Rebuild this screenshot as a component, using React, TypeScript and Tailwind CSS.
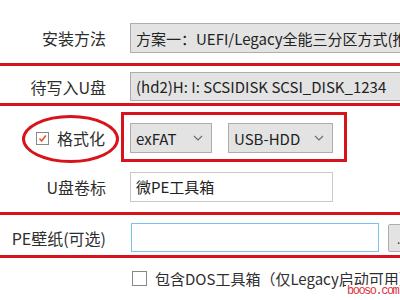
import React from "react";

const cjk = { fontFamily: '"Noto Sans CJK SC", "Noto Sans", sans-serif' };

const Chevron = () => (
  <svg width="10" height="6" viewBox="0 0 10 6" className="shrink-0">
    <path d="M1 1 L5 5 L9 1" fill="none" stroke="#6b6b6b" strokeWidth="1.1" />
  </svg>
);

const Label = ({ children }: { children: React.ReactNode }) => (
  <div className="w-[106px] shrink-0 text-right text-[16px] leading-none text-[#2e2e2e] whitespace-nowrap">
    {children}
  </div>
);

const Combo = ({
  text,
  className,
  chevron = true,
}: {
  text: string;
  className: string;
  chevron?: boolean;
}) => (
  <div
    className={`flex items-center justify-between border border-[#adadad] bg-[#e3e3e3] pl-[5px] pr-[8px] text-[15px] leading-none text-[#222] whitespace-nowrap overflow-hidden ${className}`}
  >
    <span>{text}</span>
    {chevron && <Chevron />}
  </div>
);

export default function App() {
  return (
    <div
      className="relative w-[400px] h-[300px] overflow-hidden bg-white"
      style={cjk}
    >
      <div className="flex flex-col pt-[23px]">
        <div className="flex items-center gap-[24px] h-[30px]">
          <Label>安装方法</Label>
          <Combo
            text="方案一：UEFI/Legacy全能三分区方式(推荐)"
            className="w-[300px] h-[30px] shrink-0"
            chevron={false}
          />
        </div>

        <div className="flex items-center gap-[24px] h-[29px] mt-[19px]">
          <Label>待写入U盘</Label>
          <Combo
            text="(hd2)H: I: SCSIDISK SCSI_DISK_1234"
            className="w-[300px] h-[29px] shrink-0"
            chevron={false}
          />
        </div>

        <div className="flex items-center h-[30px] mt-[22px]">
          <div className="w-[106px] shrink-0 flex items-center justify-end gap-[8px] pr-[1px]">
            <div className="w-[13px] h-[13px] border border-[#888] bg-white flex items-center justify-center">
              <svg width="9" height="9" viewBox="0 0 9 9">
                <path d="M1.5 4.5 L3.6 7 L7.8 1.5" fill="none" stroke="#e0542a" strokeWidth="1.6" />
              </svg>
            </div>
            <span className="text-[16px] leading-none text-[#2e2e2e]">格式化</span>
          </div>
          <div className="flex items-center gap-[16px] ml-[24px]">
            <Combo text="exFAT" className="w-[82px] h-[30px]" />
            <Combo text="USB-HDD" className="w-[105px] h-[30px]" />
          </div>
        </div>

        <div className="flex items-center gap-[24px] h-[30px] mt-[19px]">
          <Label>U盘卷标</Label>
          <div className="w-[203px] h-[30px] border border-[#c8c8c8] bg-white flex items-center pl-[5px] text-[15px] text-[#222]">
            微PE工具箱
          </div>
        </div>

        <div className="flex items-center gap-[25px] h-[29px] mt-[21px]">
          <Label>PE壁纸(可选)</Label>
          <div className="w-[248px] h-[29px] shrink-0 border border-[#78c5e8] bg-white" />
          <div className="ml-[-16px] w-[30px] h-[28px] shrink-0 border border-[#adadad] bg-[#e3e3e3] rounded-[2px] flex items-end justify-start pl-[8px] pb-[6px] text-[12px] leading-none text-[#333]">
            ...
          </div>
        </div>

        <div className="flex items-center h-[15px] mt-[19px] pl-[132px] gap-[8px]">
          <div className="w-[15px] h-[15px] shrink-0 border border-[#888] bg-white" />
          <span className="text-[15px] leading-none text-[#2e2e2e] whitespace-nowrap">
            包含DOS工具箱（仅Legacy启动可用）
          </span>
        </div>
      </div>

      {/* red annotations */}
      <div className="absolute left-[-4px] top-[63px] w-[410px] h-[43px] border-[3px] border-[#d7141c]" />
      <div className="absolute left-[22px] top-[115px] w-[97px] h-[48px] rounded-[50%] border-[3px] border-[#d7141c]" />
      <div className="absolute left-[121px] top-[112px] w-[226px] h-[50px] border-[3px] border-[#d7141c]" />
      <div className="absolute left-[-4px] top-[212px] w-[410px] h-[46px] border-[3px] border-[#d7141c]" />

      <div
        className="absolute left-[346px] top-[285px] bg-white text-[12px] tracking-[-1.5px] leading-none text-[#e0303a] whitespace-nowrap px-[1px]"
        style={{ fontFamily: '"Liberation Mono", monospace' }}
      >
        booso.com
      </div>
    </div>
  );
}
